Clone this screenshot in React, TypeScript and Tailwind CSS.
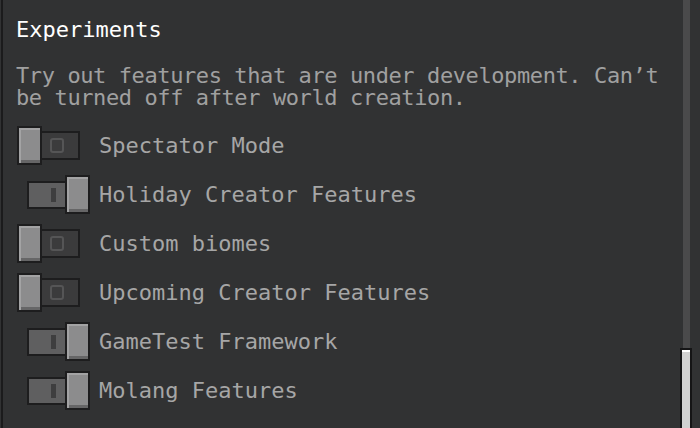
const experiments = [
  { label: "Spectator Mode", on: false },
  { label: "Holiday Creator Features", on: true },
  { label: "Custom biomes", on: false },
  { label: "Upcoming Creator Features", on: false },
  { label: "GameTest Framework", on: true },
  { label: "Molang Features", on: true },
];

function Knob() {
  return (
    <div className="relative z-10 w-[25px] h-[39px] shrink-0 border-2 border-[#1d1d1e] bg-[#8c8c8d] shadow-[inset_2px_2px_0_#a3a3a4,inset_0_-3px_0_#666667]" />
  );
}

function Toggle({ on }: { on: boolean }) {
  if (on) {
    return (
      <div className="flex items-center w-[74px] pl-[10px]">
        <div className="w-[40px] h-[28px] -mr-[2px] border-2 border-[#1d1d1e] bg-[#5f5f60] flex items-center pl-[22px]">
          <div className="w-[5px] h-[14px] bg-[#3e3e3f]" />
        </div>
        <Knob />
      </div>
    );
  }
  return (
    <div className="flex items-center w-[74px]">
      <Knob />
      <div className="w-[40px] h-[29px] -ml-[2px] border-2 border-[#1d1d1e] bg-[#3b3b3c] flex items-center pl-[8px]">
        <div className="w-[14px] h-[15px] border-2 border-[#555556] rounded-[3px]" />
      </div>
    </div>
  );
}

export default function App() {
  return (
    <div
      className="relative w-[700px] h-[428px] overflow-hidden bg-[#313233]"
      style={{ fontFamily: '"DejaVu Sans Mono", "Liberation Mono", monospace' }}
    >
      {/* left frame edge */}
      <div className="absolute left-[1px] top-0 bottom-0 w-[2px] bg-[#1b1b1c]" />

      <div className="pl-4 pt-[17px]">
        <h2 className="text-[22px] leading-[26px] text-white">Experiments</h2>
        <p className="mt-[22px] text-[22px] leading-[22px] tracking-[-0.4px] text-[#a0a0a0] w-[680px]">
          Try out features that are under development. Can’t
          <br />
          be turned off after world creation.
        </p>

        <div className="mt-[12px] flex flex-col">
          {experiments.map((item) => (
            <div key={item.label} className="h-[49px] flex items-center gap-[8px] pl-[1px]">
              <Toggle on={item.on} />
              <span className="text-[22px] leading-[22px] text-[#a6a6a6]">{item.label}</span>
            </div>
          ))}
        </div>
      </div>

      {/* scrollbar */}
      <div className="absolute right-[10px] top-0 bottom-0 w-[7px] bg-[#4a4a4b]" />
      <div className="absolute right-[8px] top-[348px] w-[12px] h-[90px] border-2 border-[#151516] bg-[#d0d0d0] shadow-[inset_0_2px_0_#ffffff]" />
    </div>
  );
}
